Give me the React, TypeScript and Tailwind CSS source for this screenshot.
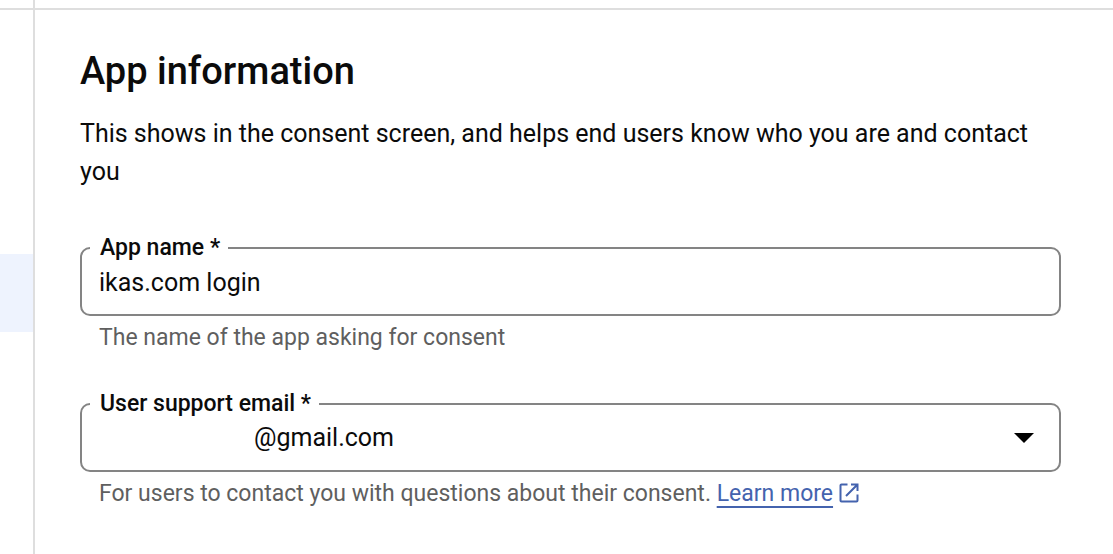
import type { ReactNode } from 'react';

type FieldProps = {
  id: string;
  label: string;
  hint: ReactNode;
  children: ReactNode;
};

function OutlinedField({ id, label, hint, children }: FieldProps) {
  return (
    <div>
      <fieldset className="rounded-[10px] border-2 border-[#848484] px-2 pb-2.5">
        <legend className="pr-2 pl-2.5 text-[23px] leading-6 font-medium">
          <label htmlFor={id}>{label}</label>
        </legend>
        <div className="flex items-center">{children}</div>
      </fieldset>
      <p className="mt-1.5 px-[19px] text-[23px] leading-8 text-[#5f5f5f]">{hint}</p>
    </div>
  );
}

function OpenInNewIcon() {
  return (
    <svg viewBox="0 0 20 20" className="ml-1.5 inline-block size-5 align-[-2px]" fill="none" stroke="currentColor" strokeWidth="2">
      <path d="M8.5 1.5H2.5A1 1 0 0 0 1.5 2.5v15A1 1 0 0 0 2.5 18.5h15a1 1 0 0 0 1-1v-6" />
      <path d="M12 1.5h6.5V8M18 2 7 13" />
    </svg>
  );
}

export default function App() {
  return (
    <div className="flex min-h-screen flex-col bg-white font-['Roboto',sans-serif] text-[#0b0b0b]">
      <header className="flex h-2.5 border-b-2 border-[#dedede]">
        <div className="w-[35px] border-r-2 border-[#dedede]" />
      </header>

      <div className="flex grow">
        <nav className="w-[35px] shrink-0 border-r-2 border-[#dedede] pt-[244px]">
          <div className="h-[78px] bg-[#eef3fe]" />
        </nav>

        <main className="min-w-0 grow pt-[41px] pr-[52px] pl-[45px]">
          <h1 className="text-[38px] leading-10 font-medium">App information</h1>
          <p className="mt-6 text-[25px] leading-[38px]">
            This shows in the consent screen, and helps end users know who you are and contact you
          </p>

          <form className="mt-[45px] flex flex-col gap-[38px]">
            <OutlinedField id="app-name" label="App name *" hint="The name of the app asking for consent">
              <input
                id="app-name"
                type="text"
                defaultValue="ikas.com login"
                className="h-11 w-full bg-transparent px-[9px] text-[25px] outline-none"
              />
            </OutlinedField>

            <OutlinedField
              id="support-email"
              label="User support email *"
              hint={
                <>
                  For users to contact you with questions about their consent.{' '}
                  <a href="#learn-more" className="text-[#4463ae]">
                    <span className="underline decoration-2 underline-offset-[5px]">Learn more</span>
                    <OpenInNewIcon />
                  </a>
                </>
              }
            >
              <select
                id="support-email"
                className="h-11 min-w-0 grow appearance-none bg-transparent pl-[164px] text-[25px] outline-none"
              >
                <option>@gmail.com</option>
              </select>
              <svg viewBox="0 0 20 10" className="pointer-events-none mr-[17px] h-2.5 w-5 shrink-0" fill="#000">
                <path d="M0 0h20L10 10z" />
              </svg>
            </OutlinedField>
          </form>
        </main>
      </div>
    </div>
  );
}
